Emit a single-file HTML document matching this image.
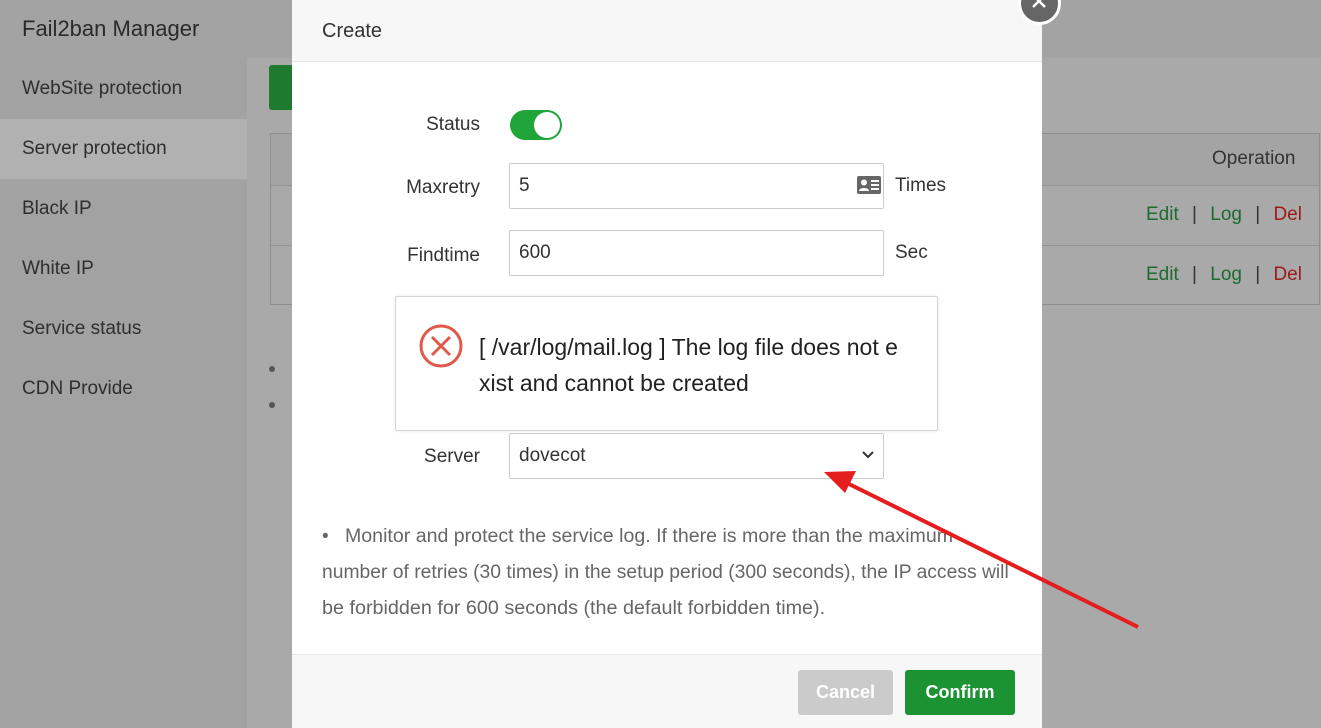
<!DOCTYPE html>
<html><head><meta charset="utf-8"><style>
*{margin:0;padding:0;box-sizing:border-box}
body{width:1321px;height:728px;overflow:hidden;position:relative;background:#a9a9a9;font-family:"Liberation Sans",sans-serif;color:#333}
.a{position:absolute}
.side{left:0;top:58px;width:247px;height:670px;background:#a2a2a2}
.nav{left:22px;font-size:19px;color:#2e2e2e}
.lbl{font-size:19px;color:#333;text-align:right;width:100px;left:380px}
.inp{border:1px solid #ccc;border-radius:2px;background:#fff;font-size:19px;color:#333;padding-left:9px;line-height:44px;height:46px}
</style></head><body>
<div class="a" style="left:0;top:0;width:1321px;height:58px;background:#a3a3a3"></div>
<div class="a" style="left:22px;top:16px;font-size:22px;color:#2a2a2a">Fail2ban Manager</div>
<div class="a side"></div>
<div class="a" style="left:0;top:119px;width:247px;height:60px;background:#b1b1b1"></div>
<div class="a nav" style="top:78px">WebSite protection</div>
<div class="a nav" style="top:138px">Server protection</div>
<div class="a nav" style="top:198px">Black IP</div>
<div class="a nav" style="top:258px">White IP</div>
<div class="a nav" style="top:318px">Service status</div>
<div class="a nav" style="top:378px">CDN Provide</div>
<div class="a" style="left:269px;top:65px;width:60px;height:45px;background:#1d7a2e;border-radius:3px"></div>
<div class="a" style="left:270px;top:133px;width:1050px;height:172px;border:1px solid #8e8e8e"></div>
<div class="a" style="left:271px;top:134px;width:1048px;height:51px;background:#a4a4a4"></div>
<div class="a" style="left:271px;top:185px;width:1048px;height:1px;background:#949494"></div>
<div class="a" style="left:271px;top:245px;width:1048px;height:1px;background:#949494"></div>
<div class="a" style="left:1212px;top:148px;font-size:19px;color:#333">Operation</div>
<div class="a" style="left:1146px;top:204px;font-size:19px;color:#1e6b30">Edit <span style="color:#333;margin:0 8px">|</span> Log <span style="color:#333;margin:0 8px">|</span> <span style="color:#9a1a1a">Del</span></div>
<div class="a" style="left:1146px;top:264px;font-size:19px;color:#1e6b30">Edit <span style="color:#333;margin:0 8px">|</span> Log <span style="color:#333;margin:0 8px">|</span> <span style="color:#9a1a1a">Del</span></div>
<div class="a" style="left:269px;top:366px;width:6px;height:6px;border-radius:50%;background:#555"></div>
<div class="a" style="left:269px;top:402px;width:6px;height:6px;border-radius:50%;background:#555"></div>

<div class="a" style="left:292px;top:0;width:750px;height:728px;background:#fff"></div>
<div class="a" style="left:292px;top:0;width:750px;height:62px;background:#f7f7f7;border-bottom:1px solid #e6e6e6"></div>
<div class="a" style="left:322px;top:20px;font-size:20px;color:#333">Create</div>
<div class="a" style="left:1018px;top:-18px;width:43px;height:43px;border-radius:50%;background:#666;border:3px solid #fff"></div>
<svg class="a" style="left:1028px;top:-8px" width="22" height="22"><path d="M5 3L17 15M17 3L5 15" stroke="#fff" stroke-width="2.5"/></svg>

<div class="a lbl" style="top:114px">Status</div>
<div class="a" style="left:510px;top:110px;width:52px;height:30px;border-radius:15px;background:#20a53a"></div>
<div class="a" style="left:534px;top:112px;width:26px;height:26px;border-radius:50%;background:#fff"></div>
<div class="a lbl" style="top:177px">Maxretry</div>
<div class="a inp" style="left:509px;top:163px;width:375px">5</div>
<svg class="a" style="left:857px;top:176px" width="24" height="18"><rect x="0" y="0" width="24" height="18" rx="2" fill="#666"/><circle cx="7" cy="6.5" r="3" fill="#fff"/><path d="M2 15c0-4 10-4 10 0z" fill="#fff"/><rect x="14" y="4" width="8" height="2" fill="#fff"/><rect x="14" y="8" width="8" height="2" fill="#fff"/><rect x="14" y="12" width="8" height="2" fill="#fff"/></svg>
<div class="a" style="left:895px;top:175px;font-size:19px">Times</div>
<div class="a lbl" style="top:245px">Findtime</div>
<div class="a inp" style="left:509px;top:230px;width:375px">600</div>
<div class="a" style="left:895px;top:242px;font-size:19px">Sec</div>

<div class="a" style="left:395px;top:296px;width:543px;height:135px;border:1px solid #d4d4d4;border-radius:2px;background:#fff;box-shadow:0 0 4px rgba(0,0,0,.08)"></div>
<svg class="a" style="left:417px;top:322px" width="48" height="48"><circle cx="24" cy="24" r="20" fill="none" stroke="#e0594b" stroke-width="3"/><path d="M15 15L33 33M33 15L15 33" stroke="#e0594b" stroke-width="3"/></svg>
<div class="a" style="left:479px;top:329px;width:460px;font-size:23px;line-height:36px;color:#222;white-space:nowrap">[ /var/log/mail.log ] The log file does not e<br>xist and cannot be created</div>

<div class="a lbl" style="top:446px">Server</div>
<div class="a inp" style="left:509px;top:433px;width:375px">dovecot</div>
<svg class="a" style="left:860px;top:448px" width="16" height="14"><path d="M3 4l5 5 5-5" stroke="#333" stroke-width="2" fill="none"/></svg>

<div class="a" style="left:322px;top:519px;white-space:nowrap;font-size:19px;line-height:36px;color:#666">
<div><span style="margin-right:16px">•</span><span style="display:inline-block;transform-origin:0 0;transform:scaleX(1.03)">Monitor and protect the service log. If there is more than the maximum</span></div>
<div><span style="display:inline-block;transform-origin:0 0;transform:scaleX(1.015)">number of retries (30 times) in the setup period (300 seconds), the IP access will</span></div>
<div><span style="display:inline-block;transform-origin:0 0;transform:scaleX(1.04)">be forbidden for 600 seconds (the default forbidden time).</span></div>
</div>

<div class="a" style="left:292px;top:654px;width:750px;height:74px;background:#f7f7f7;border-top:1px solid #e8e8e8"></div>
<div class="a" style="left:798px;top:670px;width:95px;height:45px;background:#cbcbcb;border-radius:3px;color:#fff;font-weight:bold;font-size:18px;text-align:center;line-height:45px">Cancel</div>
<div class="a" style="left:905px;top:670px;width:110px;height:45px;background:#1b9332;border-radius:3px;color:#fff;font-weight:bold;font-size:18px;text-align:center;line-height:45px">Confirm</div>

<svg class="a" style="left:0;top:0" width="1321" height="728"><line x1="1138" y1="627" x2="845" y2="482" stroke="#e41e1e" stroke-width="4"/><path d="M824 472L856 471L845 493Z" fill="#e41e1e"/></svg>
</body></html>
